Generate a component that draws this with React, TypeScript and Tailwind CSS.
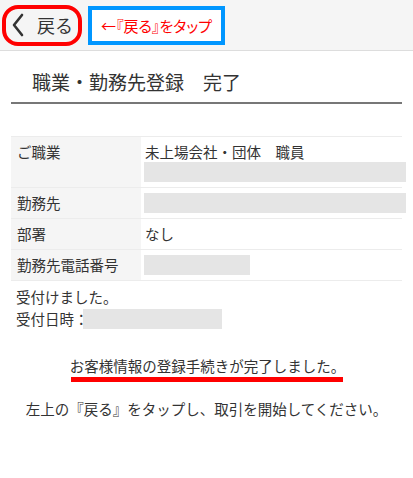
import React from 'react';

const font = "font-['Noto_Sans_CJK_JP','Noto_Sans',sans-serif]";

const rows: { label: string; value?: string; box?: string; tall?: boolean }[] = [
  { label: 'ご職業', value: '未上場会社・団体　職員', box: 'w-[262px]', tall: true },
  { label: '勤務先', box: 'w-[262px]' },
  { label: '部署', value: 'なし' },
  { label: '勤務先電話番号', box: 'w-[106px]' },
];

export default function App() {
  return (
    <div className={`w-[413px] h-[478px] bg-white text-[#333] ${font}`}>
      {/* Header */}
      <div className="h-[51px] bg-[#f5f5f5] border-b border-[#dddddd] flex items-center pl-[2px]">
        <div className="w-[80px] h-[41px] border-[4px] border-[#ff0000] rounded-[16px] flex items-center pl-[5px]">
          <svg width="14" height="24" viewBox="0 0 14 24" className="mr-[12px]">
            <path d="M11 2 L3 12 L11 22" fill="none" stroke="#333" strokeWidth="2.6" strokeLinecap="round" strokeLinejoin="round" />
          </svg>
          <span className="text-[18px] leading-none">戻る</span>
        </div>
        <div className="ml-[6px] w-[137px] h-[39px] border-[4px] border-[#0096ff] bg-white flex items-center justify-center">
          <span className="text-[15px] leading-none text-[#ff0000] [font-feature-settings:'palt']">←『戻る』をタップ</span>
        </div>
      </div>

      {/* Title */}
      <div className="mx-[11px] h-[53px] border-b-2 border-[#777] flex items-center pl-[21px] pt-[10px]">
        <h1 className="text-[19px] leading-none font-normal">職業・勤務先登録　完了</h1>
      </div>

      {/* Table */}
      <div className="mt-[32px] ml-[11px] w-[391px] text-[14.5px] leading-[20px]">
        {rows.map((r, i) => (
          <div key={r.label} className={`flex border-t border-[#ececec] ${i === rows.length - 1 ? 'border-b' : ''}`}>
            <div className="w-[130px] bg-[#f5f5f5] pl-[6px] py-[5px] shrink-0">{r.label}</div>
            <div className="flex-1 pl-[3px] py-[5px]">
              {r.value && <div className="pl-[1px]">{r.value}</div>}
              {r.box && <div className={`${r.box} h-[20px] bg-[#e5e5e5]`} />}
            </div>
          </div>
        ))}
      </div>

      {/* Received */}
      <div className="mt-[5px] pl-[16px] text-[14.5px] leading-[22px]">
        <p>受付けました。</p>
        <p className="flex items-center">
          受付日時：<span className="inline-block -ml-[6px] w-[139px] h-[20px] bg-[#e5e5e5]" />
        </p>
      </div>

      {/* Completion message */}
      <div className="mt-[26px] flex flex-col items-center text-[14.5px]">
        <div className="flex flex-col items-center">
          <p className="leading-[20px] pl-[2px]">お客様情報の登録手続きが完了しました。</p>
          <div className="w-[272px] h-[5px] bg-[#ff0000] mt-[1px]" />
        </div>
        <p className="mt-[17px] leading-[20px]">左上の『戻る』をタップし、取引を開始してください。</p>
      </div>
    </div>
  );
}
